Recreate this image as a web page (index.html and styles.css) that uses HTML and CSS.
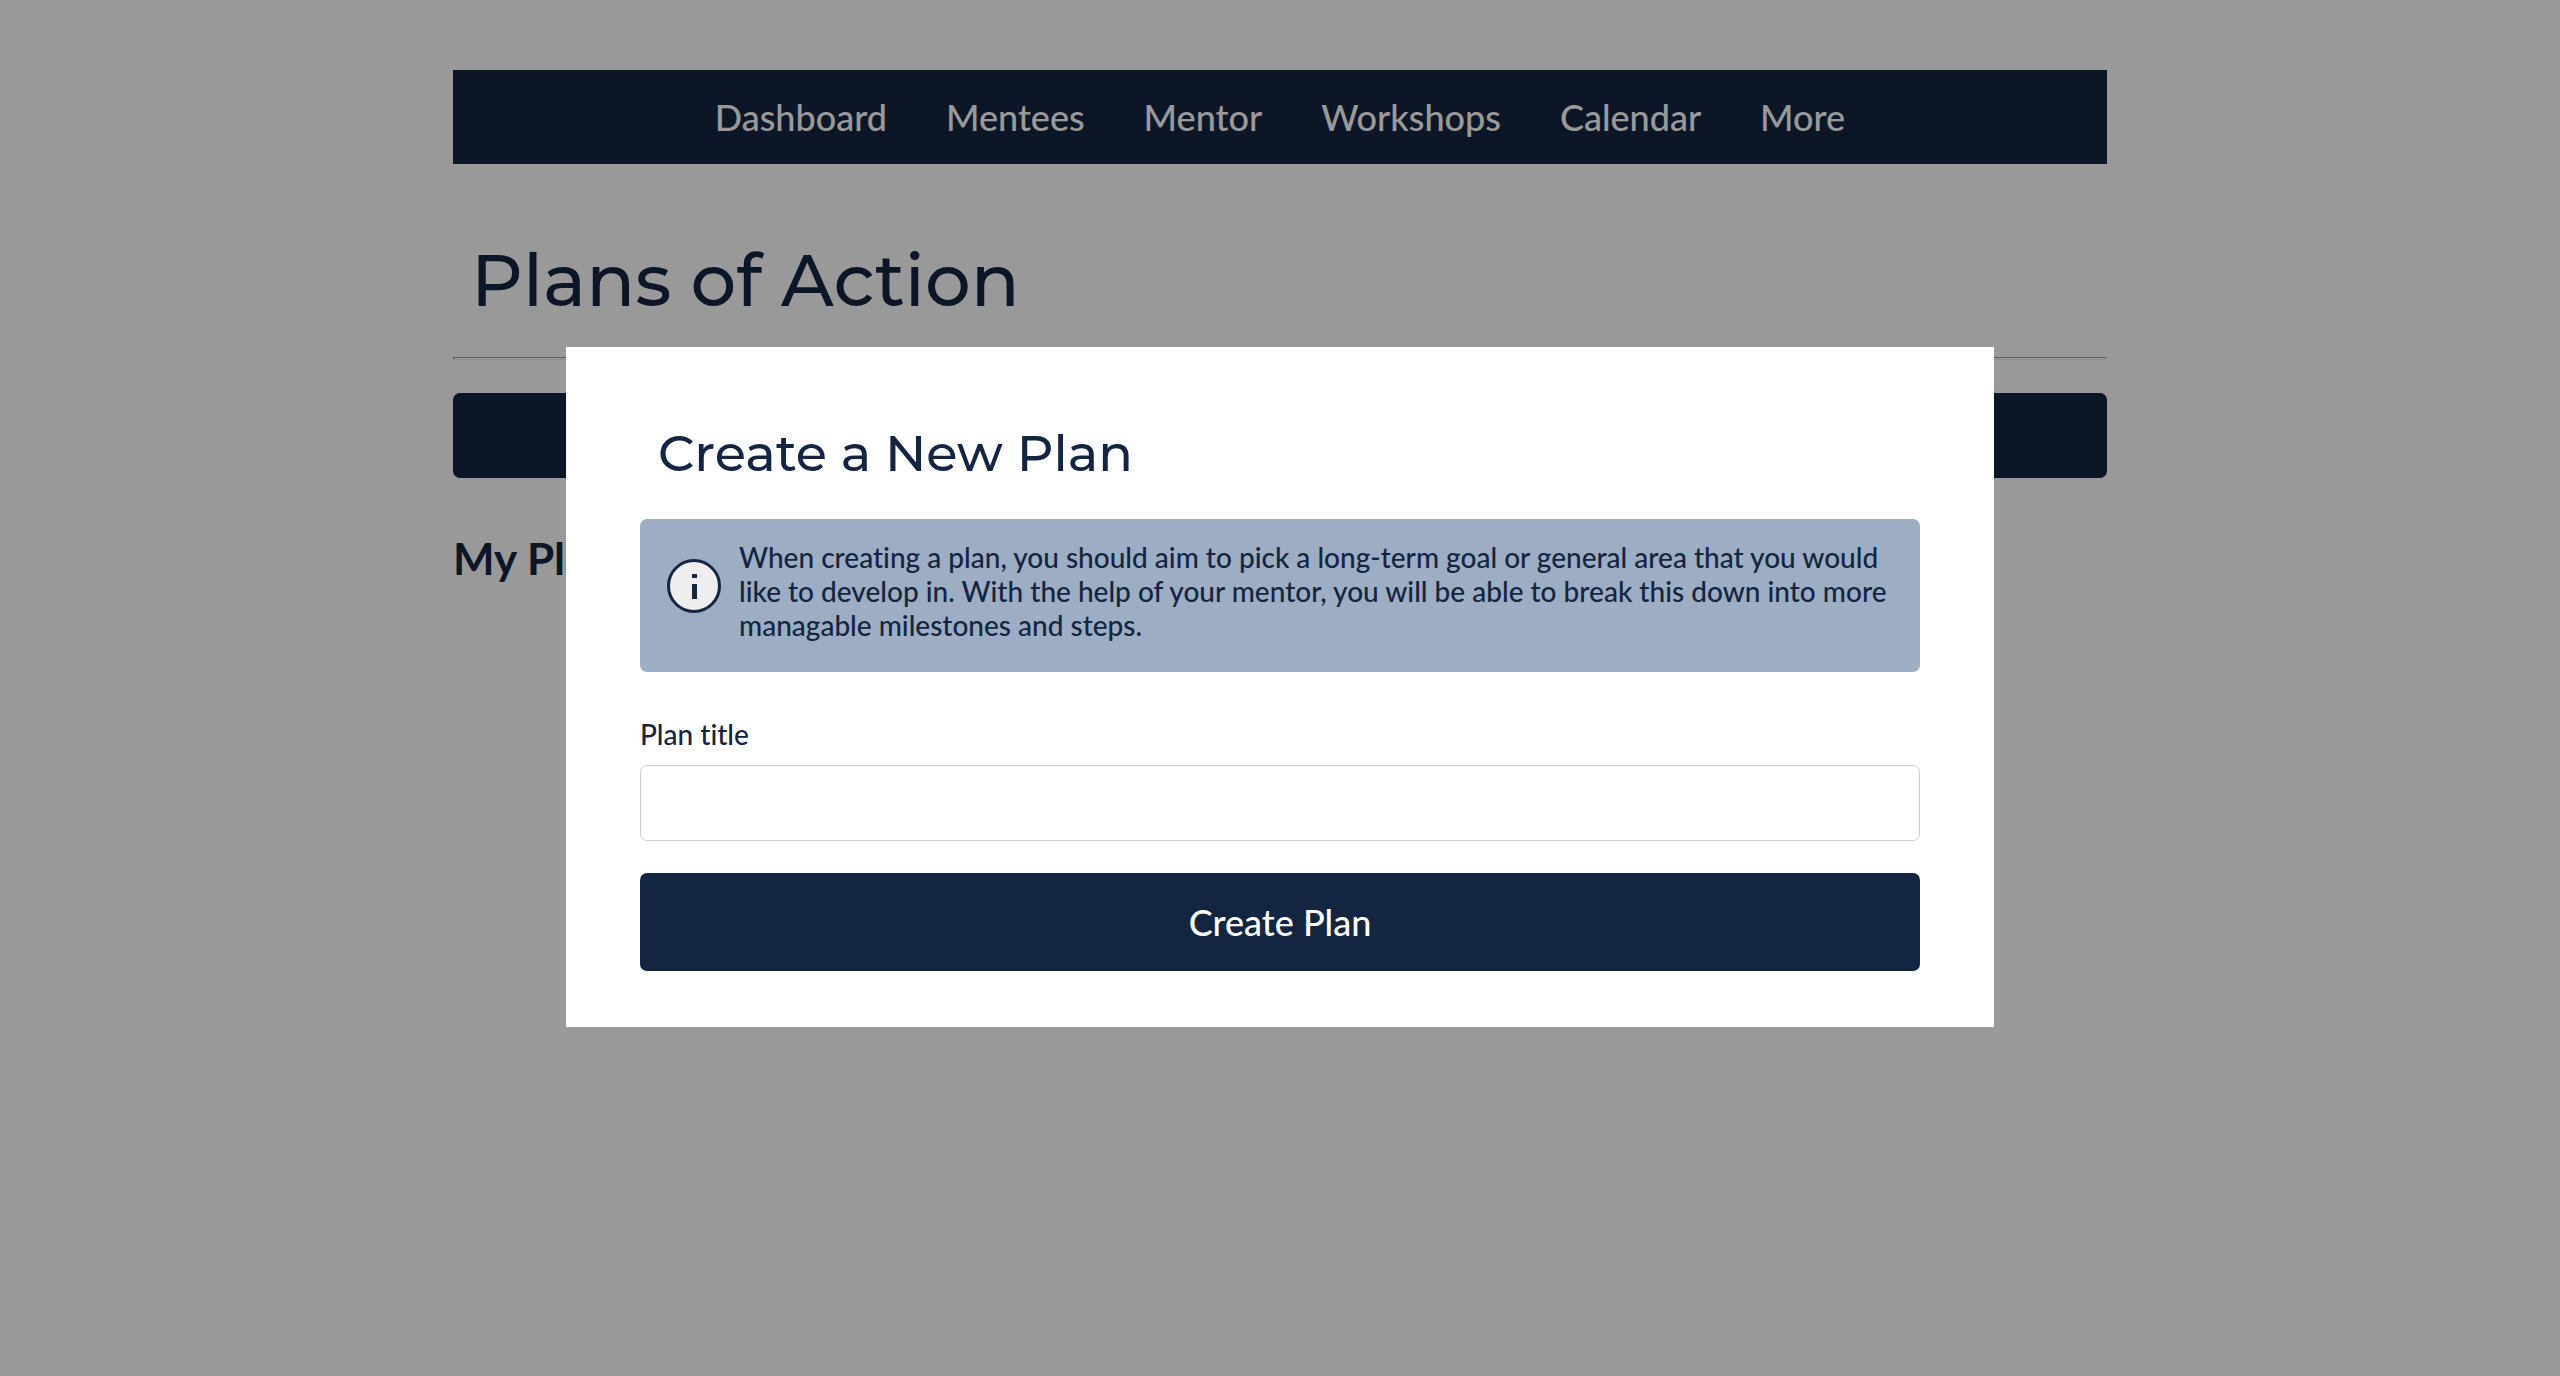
FILE: index.html
```html
<!DOCTYPE html>
<html lang="en">
<head>
  <meta charset="utf-8">
  <meta name="viewport" content="width=device-width, initial-scale=1">
  <title>Plans of Action</title>
  <link rel="stylesheet" href="styles.css">
</head>
<body>
  <div class="page">
    <nav class="nav" aria-label="Main">
      <a class="nav-link" href="#">Dashboard</a>
      <a class="nav-link" href="#">Mentees</a>
      <a class="nav-link" href="#">Mentor</a>
      <a class="nav-link" href="#">Workshops</a>
      <a class="nav-link" href="#">Calendar</a>
      <a class="nav-link" href="#">More</a>
    </nav>
    <main>
      <h1 class="page-title">Plans of Action</h1>
      <hr class="rule">
      <button class="new-plan" type="button" aria-label="New plan"></button>
      <h2 class="section-title">My Plans</h2>
    </main>
  </div>

  <div class="overlay">
    <section class="modal" role="dialog" aria-modal="true" aria-labelledby="modal-title">
      <h2 class="modal-title" id="modal-title">Create a New Plan</h2>
      <div class="info">
        <svg class="info-icon" viewBox="0 0 54 54" aria-hidden="true">
          <circle cx="27" cy="27" r="25.5" fill="#eeeeee" stroke="#142541" stroke-width="3"/>
          <path d="M25 15h5v4h-5zM25 25h5v15h-5z" fill="#142541"/>
        </svg>
        <p class="info-text">When creating a plan, you should aim to pick a long-term goal or general area that you would like to develop in. With the help of your mentor, you will be able to break this down into more managable milestones and steps.</p>
      </div>
      <form class="form">
        <label class="label" for="plan-title">Plan title</label>
        <input class="input" id="plan-title" type="text">
        <button class="submit" type="submit">Create Plan</button>
      </form>
    </section>
  </div>
</body>
</html>
```
FILE: styles.css
```css
* {
  box-sizing: border-box;
}

body {
  margin: 0;
  background: #ffffff;
  color: #142541;
  font-family: Lato, "Liberation Sans", sans-serif;
  font-size: 28px;
  font-weight: 500;
  font-variant-ligatures: none;
  line-height: 34px;
}

.page {
  max-width: 1654px;
  margin: 0 auto;
  padding-top: 70px;
}

.nav {
  display: flex;
  flex-wrap: wrap;
  justify-content: center;
  gap: 0 59px;
  padding: 24px;
  background: #142541;
}

.nav-link {
  color: #ffffff;
  font-size: 36px;
  line-height: 46px;
  text-decoration: none;
}

.page-title {
  margin: 72px 18px 33px;
  font-family: Montserrat, Inter, sans-serif;
  font-size: 72px;
  font-weight: 500;
  line-height: 88px;
}

.rule {
  height: 3px;
  margin: 0 0 33px;
  border: 1px solid;
  border-color: #9a9a9a #eeeeee #eeeeee #9a9a9a;
}

.new-plan {
  display: block;
  width: 100%;
  height: 85px;
  border: 0;
  border-radius: 7px;
  background: #142541;
}

.section-title {
  margin: 53px 0 0;
  font-size: 44px;
  font-weight: 700;
  line-height: 54px;
}

.overlay {
  position: fixed;
  inset: 0;
  display: flex;
  align-items: center;
  justify-content: center;
  padding-bottom: 2px;
  background: rgba(0, 0, 0, 0.4);
}

.modal {
  width: calc(50% + 148px);
  padding: 74px 74px 56px;
  background: #ffffff;
}

.modal-title {
  margin: 0 18px 34px;
  font-family: Montserrat, Inter, sans-serif;
  font-size: 51px;
  font-weight: 500;
  line-height: 64px;
}

.info {
  display: flex;
  gap: 18px;
  padding: 21px 24px 30px 27px;
  border-radius: 7px;
  background: #9dadc3;
}

.info-icon {
  flex: none;
  width: 54px;
  height: 54px;
  margin-top: 19px;
}

.info-text {
  margin: 0;
}

.form {
  display: flex;
  flex-direction: column;
  margin-top: 45px;
}

.label {
  margin-bottom: 14px;
}

.input {
  height: 76px;
  padding: 0 24px;
  border: 1px solid #cccccc;
  border-radius: 7px;
  font: inherit;
  color: inherit;
}

.submit {
  height: 98px;
  margin-top: 32px;
  border: 0;
  border-radius: 7px;
  background: #142541;
  color: #ffffff;
  font-family: inherit;
  font-size: 36px;
  font-weight: 500;
}
```
